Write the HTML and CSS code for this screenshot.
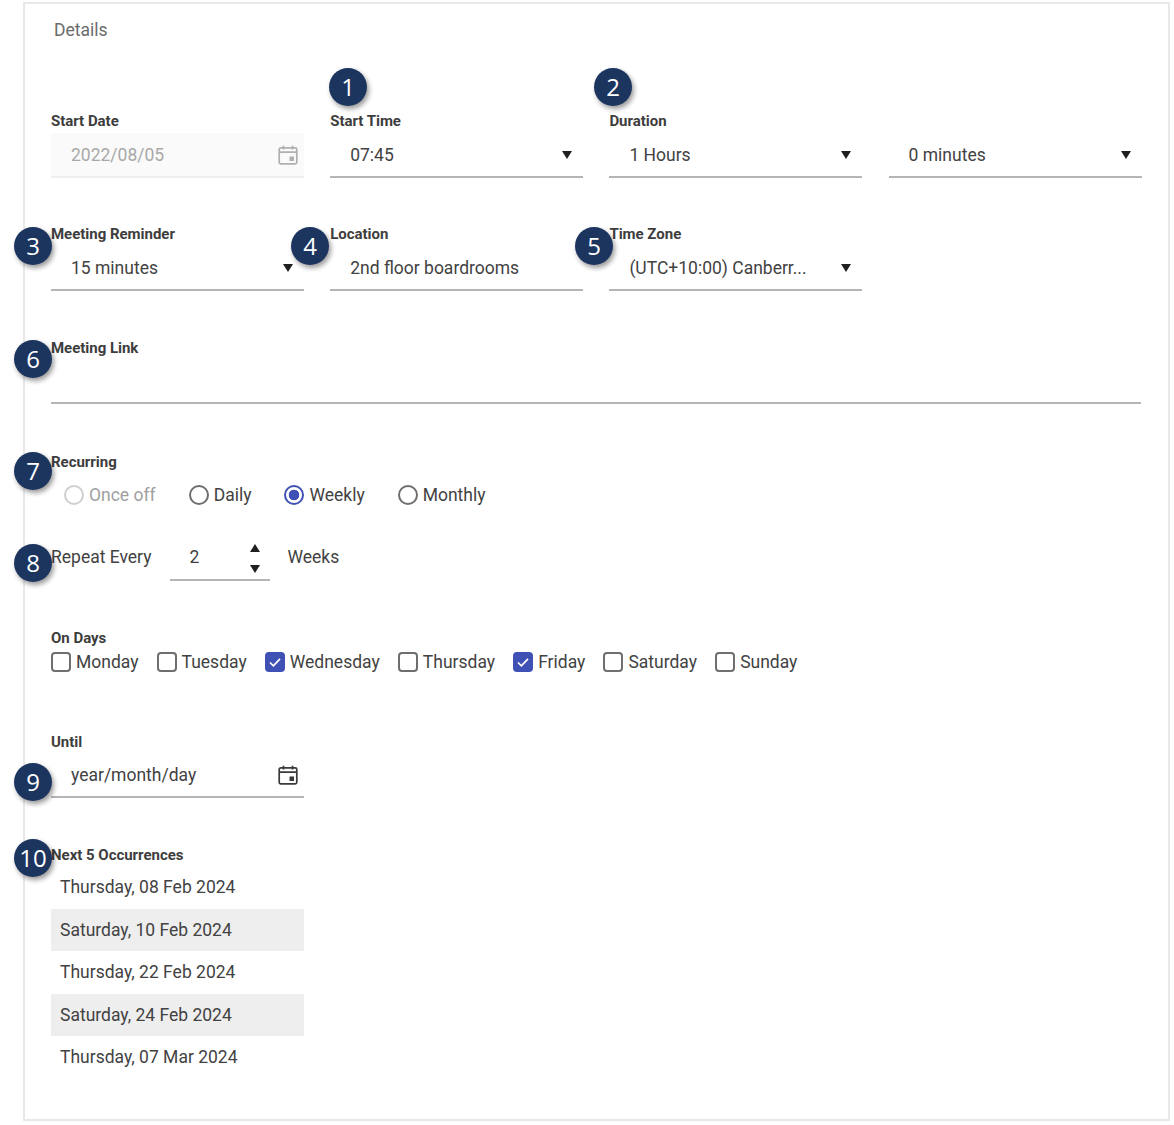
FILE: index.html
```html
<!DOCTYPE html>
<html lang="en">
<head>
<meta charset="utf-8">
<title>Details</title>
<link rel="stylesheet" href="styles.css">
</head>
<body>
<svg class="defs" width="0" height="0" aria-hidden="true">
  <symbol id="cal" viewBox="0 0 20 20">
    <rect x="1.2" y="2.8" width="17.6" height="16" rx="1.6" fill="none" stroke="currentColor" stroke-width="1.7"/>
    <path d="M1.5 7.2h17M5.5 .8v3.6M14.5 .8v3.6" fill="none" stroke="currentColor" stroke-width="1.7"/>
    <rect x="11.5" y="11.5" width="4.5" height="4.5" fill="currentColor"/>
  </symbol>
  <symbol id="tick" viewBox="0 0 20 20"><path d="M5 10.5l3.4 3.3L15 6.8" fill="none" stroke="#fff" stroke-width="1.7"/></symbol>
</svg>
<main class="panel">
  <h2 class="title">Details</h2>

  <div class="grid row-1">
    <div class="field">
      <div class="label">Start Date</div>
      <div class="control disabled"><span>2022/08/05</span><svg class="cal"><use href="#cal"/></svg></div>
    </div>
    <div class="field">
      <div class="label">Start Time</div>
      <div class="control"><span>07:45</span><i class="arrow"></i></div>
    </div>
    <div class="field">
      <div class="label">Duration</div>
      <div class="control"><span>1 Hours</span><i class="arrow"></i></div>
    </div>
    <div class="field">
      <div class="label label-empty">&nbsp;</div>
      <div class="control"><span>0 minutes</span><i class="arrow"></i></div>
    </div>
  </div>

  <div class="grid row-2">
    <div class="field">
      <div class="label">Meeting Reminder</div>
      <div class="control"><span>15 minutes</span><i class="arrow"></i></div>
    </div>
    <div class="field">
      <div class="label">Location</div>
      <div class="control"><span>2nd floor boardrooms</span></div>
    </div>
    <div class="field">
      <div class="label">Time Zone</div>
      <div class="control"><span>(UTC+10:00) Canberr...</span><i class="arrow"></i></div>
    </div>
  </div>

  <div class="field row-3">
    <div class="label">Meeting Link</div>
    <div class="control"></div>
  </div>

  <div class="row-4">
    <div class="label">Recurring</div>
    <div class="radios">
      <div class="opt muted"><i class="radio"></i>Once off</div>
      <div class="opt"><i class="radio"></i>Daily</div>
      <div class="opt"><i class="radio on"></i>Weekly</div>
      <div class="opt"><i class="radio"></i>Monthly</div>
    </div>
  </div>

  <div class="repeat">
    <span>Repeat Every</span>
    <div class="spin"><span>2</span><div class="spin-btns"><i class="up"></i><i class="down"></i></div></div>
    <span>Weeks</span>
  </div>

  <div class="days-block">
    <div class="label">On Days</div>
    <div class="days">
      <div class="day"><i class="check"></i>Monday</div>
      <div class="day"><i class="check"></i>Tuesday</div>
      <div class="day"><i class="check on"><svg><use href="#tick"/></svg></i>Wednesday</div>
      <div class="day"><i class="check"></i>Thursday</div>
      <div class="day"><i class="check on"><svg><use href="#tick"/></svg></i>Friday</div>
      <div class="day"><i class="check"></i>Saturday</div>
      <div class="day"><i class="check"></i>Sunday</div>
    </div>
  </div>

  <div class="field narrow until">
    <div class="label">Until</div>
    <div class="control"><span>year/month/day</span><svg class="cal dark"><use href="#cal"/></svg></div>
  </div>

  <div class="narrow next">
    <div class="label">Next 5 Occurrences</div>
    <ul class="list">
      <li>Thursday, 08 Feb 2024</li>
      <li>Saturday, 10 Feb 2024</li>
      <li>Thursday, 22 Feb 2024</li>
      <li>Saturday, 24 Feb 2024</li>
      <li>Thursday, 07 Mar 2024</li>
    </ul>
  </div>
</main>

<div class="badge b1">1</div>
<div class="badge b2">2</div>
<div class="badge b3">3</div>
<div class="badge b4">4</div>
<div class="badge b5">5</div>
<div class="badge b6">6</div>
<div class="badge b7">7</div>
<div class="badge b8">8</div>
<div class="badge b9">9</div>
<div class="badge b10">10</div>
</body>
</html>
```
FILE: styles.css
```css
* { box-sizing: border-box; }
html, body { margin: 0; padding: 0; background: #fff; }
body {
  position: relative;
  width: 1174px;
  height: 1125px;
  overflow: hidden;
  font-family: Roboto, "Liberation Sans", sans-serif;
  font-size: 17.5px;
  color: #424242;
}
.defs { position: absolute; }

.panel {
  width: 1147px;
  height: 1119px;
  margin: 2px 0 0 23px;
  padding: 0 27px 0 26px;
  border: 2px solid #e8e8e8;
}
.title {
  margin: 14px 0 0 3px;
  font-size: 17.5px;
  line-height: 24px;
  font-weight: 400;
  color: #6b6b6b;
}

.grid {
  display: grid;
  grid-template-columns: repeat(4, 253px);
  column-gap: 26.2px;
}
.row-1 { margin-top: 70px; }
.row-2 { margin-top: 47px; }
.row-3 { margin-top: 48px; }
.row-4 { margin-top: 49px; }

.label {
  height: 21px;
  font-size: 15px;
  line-height: 18px;
  font-weight: 700;
  letter-spacing: -0.02px;
  color: #3d3d3d;
}
.grid .label { line-height: 19px; }
.until .label { line-height: 20px; }
.control {
  display: flex;
  align-items: center;
  justify-content: space-between;
  height: 45px;
  padding: 0 11px 0 20px;
  border-bottom: 2px solid #b5b5b5;
}
.row-3 .control { height: 44px; }
.disabled {
  background: #fafafa;
  color: #a8a8a8;
  border-bottom-color: #eeeeee;
}
.control .cal { margin-right: -5px; }
.arrow {
  width: 0;
  height: 0;
  border-left: 5.5px solid transparent;
  border-right: 5.5px solid transparent;
  border-top: 8px solid #1f1f1f;
}
.cal { width: 20px; height: 20px; color: #b0b0b0; }
.cal.dark { color: #3a3a3a; }

.radios { display: flex; gap: 33px; padding-left: 13px; height: 42px; align-items: center; }
.opt { display: flex; align-items: center; gap: 5px; }
.muted { color: #a0a0a0; }
.radio {
  width: 20px;
  height: 20px;
  border: 2px solid #6e6e6e;
  border-radius: 50%;
}
.muted .radio { border-color: #cfcfcf; }
.radio.on {
  border-color: #3f51b5;
  background: radial-gradient(circle, #3f51b5 0 5px, #fff 5.6px);
}

.repeat {
  display: flex;
  align-items: center;
  gap: 18px;
  margin-top: 21px;
  height: 44px;
  padding-bottom: 5px;
}
.spin {
  display: flex;
  align-items: center;
  justify-content: space-between;
  width: 100px;
  height: 44px;
  margin-bottom: -5px;
  padding: 0 10px 3px 20px;
  border-bottom: 2px solid #b5b5b5;
}
.spin-btns { display: flex; flex-direction: column; gap: 13px; margin-top: 4px; }
.spin-btns i {
  display: block;
  width: 0;
  height: 0;
  border-left: 5.5px solid transparent;
  border-right: 5.5px solid transparent;
}
.spin-btns .up { border-bottom: 8px solid #1f1f1f; }
.spin-btns .down { border-top: 8px solid #1f1f1f; }

.days-block { margin-top: 48px; }
.days { display: flex; gap: 18.1px; height: 24px; align-items: center; }
.day { display: flex; align-items: center; gap: 5px; }
.check {
  display: block;
  width: 20px;
  height: 20px;
  border: 2px solid #6e6e6e;
  border-radius: 4px;
}
.check.on { border: 0; background: #3f51b5; }
.check svg { display: block; width: 20px; height: 20px; }

.narrow { width: 253px; }
.until { margin-top: 58px; }
.next { margin-top: 48px; }
.list { list-style: none; margin: -1px 0 0; padding: 0; }
.list li {
  height: 42.5px;
  line-height: 42px;
  padding-left: 9px;
}
.list li:nth-child(even) { background: #eeeeee; }

.badge {
  position: absolute;
  width: 38px;
  height: 38px;
  border-radius: 50%;
  background: #1c355f;
  color: #fff;
  font-family: "Open Sans", "Noto Sans", sans-serif;
  font-size: 24px;
  line-height: 38px;
  text-align: center;
  box-shadow: 2px 3px 5px rgba(0, 0, 0, 0.4);
}
.b1 { left: 329px; top: 68px; }
.b2 { left: 594px; top: 68px; }
.b3 { left: 14px; top: 227px; }
.b4 { left: 291px; top: 227px; }
.b5 { left: 575px; top: 227px; }
.b6 { left: 14px; top: 340px; }
.b7 { left: 14px; top: 452px; }
.b8 { left: 14px; top: 544px; }
.b9 { left: 14px; top: 763px; }
.b10 { left: 14px; top: 839px; }
```
